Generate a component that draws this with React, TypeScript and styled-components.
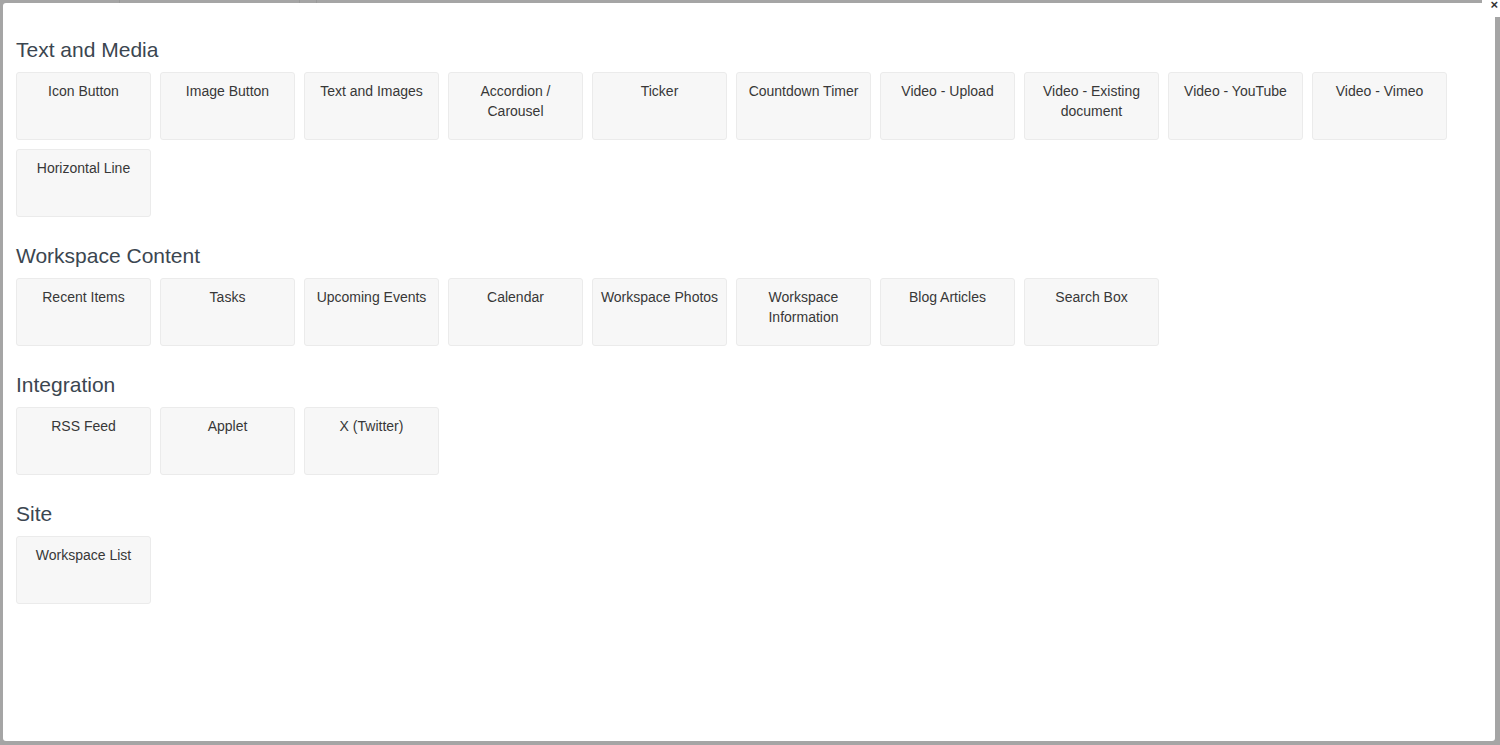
import React from "react";
import styled, { createGlobalStyle } from "styled-components";

const Global = createGlobalStyle`
  html, body { margin: 0; padding: 0; }
  body {
    background: #a5a5a5;
    font-family: "Liberation Sans", Arial, sans-serif;
    overflow: hidden;
  }
`;

const Backdrop = styled.div`
  position: relative;
  width: 1500px;
  height: 745px;
  box-sizing: border-box;
  padding: 3px 5px 4px 3px;
  background: #a5a5a5;
`;

const TopSeams = styled.div`
  position: absolute;
  top: 0;
  left: 0;
  right: 0;
  height: 3px;
`;

const Seam = styled.span<{ $x: number }>`
  position: absolute;
  top: 0;
  left: ${(p) => p.$x}px;
  width: 1px;
  height: 3px;
  background: #9a9a9a;
`;

const Modal = styled.div`
  height: 100%;
  box-sizing: border-box;
  background: #ffffff;
  border-radius: 3px;
  padding: 36px 13px 0 13px;
  overflow: hidden;
  display: flex;
  flex-direction: column;
  gap: 28px;
`;

const CloseBox = styled.button`
  position: absolute;
  top: 0;
  right: 0;
  width: 18px;
  height: 17px;
  border: none;
  padding: 0 2px 0 0;
  margin: 0;
  background: #ffffff;
  color: #333;
  font-family: "Liberation Sans", Arial, sans-serif;
  font-size: 13px;
  font-weight: bold;
  line-height: 10px;
  display: flex;
  align-items: flex-start;
  justify-content: flex-end;
  cursor: pointer;
`;

const Section = styled.section`
  display: flex;
  flex-direction: column;
  gap: 11px;
`;

const Heading = styled.h3`
  margin: 0;
  font-family: "Liberation Sans", Arial, sans-serif;
  font-weight: normal;
  font-size: 21px;
  line-height: 22px;
  color: #3b4650;
`;

const Grid = styled.div`
  display: flex;
  flex-wrap: wrap;
  gap: 9px 9px;
  width: 1440px;
`;

const Tile = styled.div`
  width: 135px;
  height: 68px;
  box-sizing: border-box;
  background: #f7f7f7;
  border: 1px solid #ebebeb;
  border-radius: 3px;
  padding: 8px 6px 0 6px;
  text-align: center;
  font-size: 14px;
  line-height: 20px;
  color: #383838;
  cursor: pointer;
`;

const sections: { title: string; items: string[] }[] = [
  {
    title: "Text and Media",
    items: [
      "Icon Button",
      "Image Button",
      "Text and Images",
      "Accordion / Carousel",
      "Ticker",
      "Countdown Timer",
      "Video - Upload",
      "Video - Existing document",
      "Video - YouTube",
      "Video - Vimeo",
      "Horizontal Line",
    ],
  },
  {
    title: "Workspace Content",
    items: [
      "Recent Items",
      "Tasks",
      "Upcoming Events",
      "Calendar",
      "Workspace Photos",
      "Workspace Information",
      "Blog Articles",
      "Search Box",
    ],
  },
  { title: "Integration", items: ["RSS Feed", "Applet", "X (Twitter)"] },
  { title: "Site", items: ["Workspace List"] },
];

export default function App() {
  return (
    <>
      <Global />
      <Backdrop>
        <TopSeams>
          <Seam $x={119} />
          <Seam $x={299} />
          <Seam $x={316} />
        </TopSeams>
        <Modal>
          {sections.map((s) => (
            <Section key={s.title}>
              <Heading>{s.title}</Heading>
              <Grid>
                {s.items.map((it) => (
                  <Tile key={it}>{it}</Tile>
                ))}
              </Grid>
            </Section>
          ))}
        </Modal>
        <CloseBox aria-label="Close">×</CloseBox>
      </Backdrop>
    </>
  );
}
